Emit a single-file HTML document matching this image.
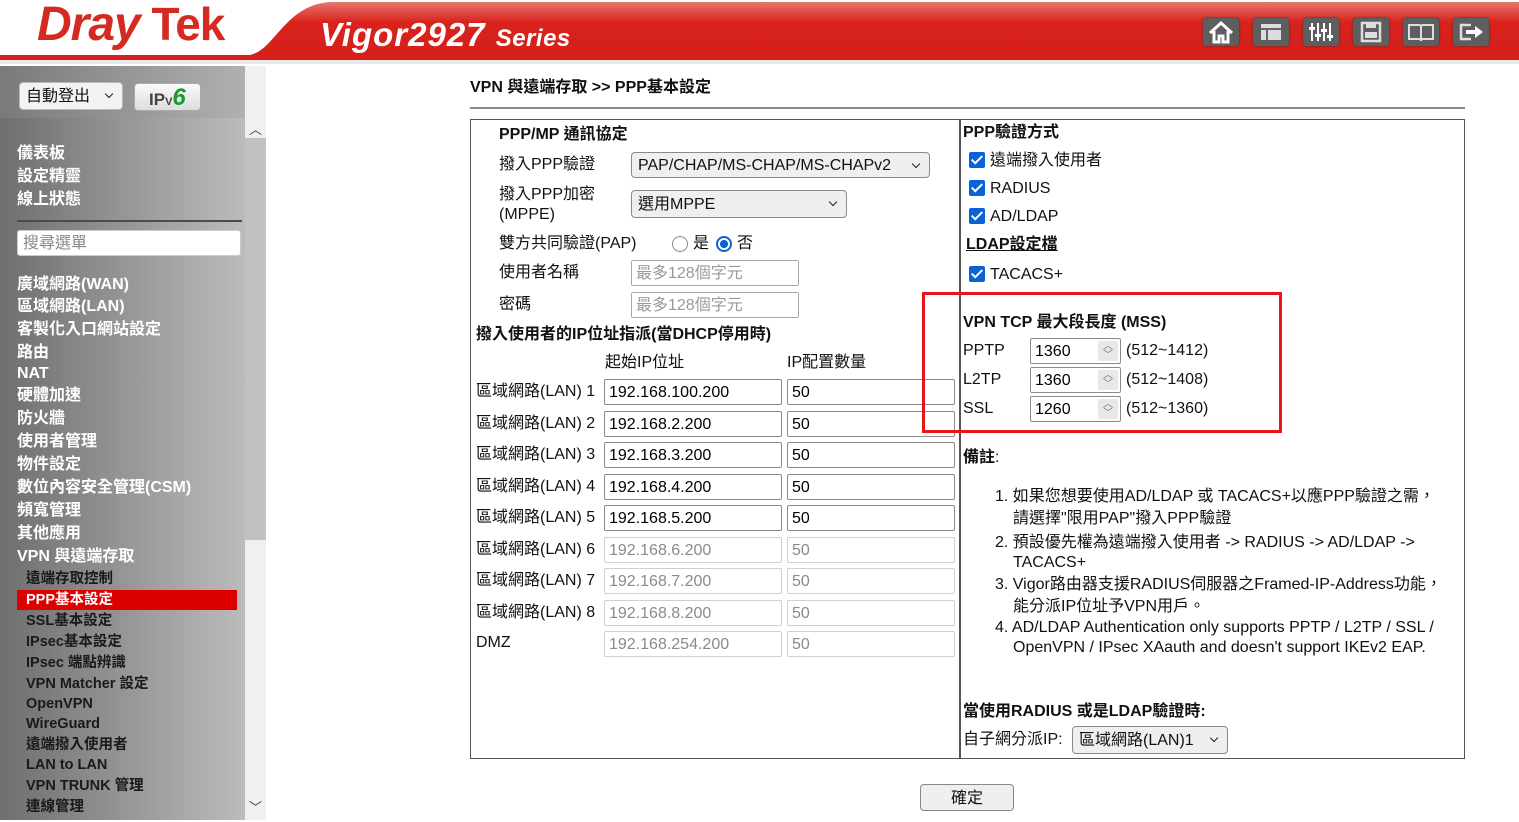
<!DOCTYPE html>
<html><head><meta charset="utf-8">
<style>
*{box-sizing:border-box;margin:0;padding:0}
body{width:1519px;height:820px;overflow:hidden;background:#fff;position:relative;font-family:"Liberation Sans","Noto Sans CJK TC",sans-serif;font-size:16px;color:#111}
.a{position:absolute;white-space:nowrap;line-height:28px}
.b{font-weight:bold}
.inp{position:absolute;border:1px solid #8a8a8a;border-radius:2px;background:#fff;height:26px;padding-left:4px;line-height:26px;font-size:16px;color:#000}
.dis{border-color:#d0d0d0;color:#8a8a8a}
.ph{color:#999;border-color:#a8a8a8}
.sel{position:absolute;border:1px solid #8a8a8a;border-radius:4px;background:#efefef;padding-left:6px;line-height:26px;font-size:16px}
.sel:after{content:"";position:absolute;right:10px;top:8px;width:5px;height:5px;border-right:1.6px solid #222;border-bottom:1.6px solid #222;transform:rotate(45deg)}
.cb{position:absolute;width:16px;height:16px;background:#0a63d6;border-radius:2px}
.cb:after{content:"";position:absolute;left:5px;top:1px;width:4px;height:9px;border-right:2px solid #fff;border-bottom:2px solid #fff;transform:rotate(45deg)}
.side{color:#fff;font-weight:bold;font-size:16px;line-height:24px}
.sub{color:#1a1a1a;font-weight:bold;font-size:14.5px;left:26px;line-height:24px}
.ic{position:absolute;top:18px;width:36px;height:28px;background:#5e5e5e;border-radius:3px;box-shadow:0 0 2px #333}
.sp{position:absolute;right:2px;top:2px;width:20px;height:20px;background:#e8e8e8;font-size:10px;line-height:9px;text-align:center;color:#777;padding-top:1px}
</style></head><body>
<svg class="a" style="left:0;top:0" width="1519" height="66">
<defs><linearGradient id="rg" x1="0" y1="0" x2="0" y2="1"><stop offset="0" stop-color="#e8756f"/><stop offset=".35" stop-color="#d9221c"/><stop offset="1" stop-color="#d41f1a"/></linearGradient></defs>
<rect width="1519" height="66" fill="#fff"/>
<path d="M0 55 L250 55 C275 50 285 5 330 2 L1519 2 L1519 60 L0 60 Z" fill="url(#rg)"/>
<rect x="0" y="60" width="1519" height="4" fill="#e9e9e9"/>
</svg>
<div class="a" style="left:37px;top:0px;font-size:48px;line-height:48px;font-weight:bold;font-style:italic;color:#d42a22;letter-spacing:-1px">Dray<span style="font-style:normal;font-size:46px"> Tek</span></div>
<div class="a" style="left:320px;top:17px;font-size:33px;line-height:36px;font-weight:bold;font-style:italic;color:#fff;letter-spacing:1px">Vigor2927 <span style="font-size:24px;letter-spacing:0.5px">Series</span></div>
<div class="ic" style="left:1203px"><svg width="36" height="28"><path d="M7 15 L18 5 L29 15 M11 13 V24 H16 V18 H20 V24 H25 V13" fill="none" stroke="#fff" stroke-width="3"/></svg></div>
<div class="ic" style="left:1253px"><svg width="36" height="28"><rect x="8" y="6" width="20" height="16" fill="#ddd"/><rect x="8" y="10" width="20" height="2" fill="#666"/><rect x="13" y="12" width="2" height="10" fill="#666"/></svg></div>
<div class="ic" style="left:1303px"><svg width="36" height="28"><g stroke="#fff" stroke-width="2"><path d="M9 5V23M15 5V23M21 5V23M27 5V23"/></g><g fill="#fff"><rect x="6" y="9" width="6" height="3"/><rect x="12" y="16" width="6" height="3"/><rect x="18" y="11" width="6" height="3"/><rect x="24" y="17" width="6" height="3"/></g></svg></div>
<div class="ic" style="left:1353px"><svg width="36" height="28"><rect x="9" y="5" width="18" height="18" fill="none" stroke="#ddd" stroke-width="2.5"/><rect x="13" y="5" width="10" height="5" fill="#ddd"/><rect x="12" y="14" width="12" height="6" fill="#ddd"/></svg></div>
<div class="ic" style="left:1403px"><svg width="36" height="28"><path d="M6 7 H16 Q18 7 18 9 Q18 7 20 7 H30 V21 H20 Q18 21 18 23 Q18 21 16 21 H6 Z M18 9 V22" fill="none" stroke="#ddd" stroke-width="2"/></svg></div>
<div class="ic" style="left:1453px"><svg width="36" height="28"><path d="M18 7 H8 V21 H18" fill="none" stroke="#ddd" stroke-width="2.5"/><path d="M13 12 H22 V8 L30 14 L22 20 V16 H13 Z" fill="#fff"/></svg></div>
<div class="a" style="left:0;top:66px;width:245px;height:754px;background:linear-gradient(90deg,#6e6e6e,#bcbcbc)"></div>
<div class="a" style="left:245px;top:66px;width:21px;height:754px;background:#f0f0f0"></div>
<div class="a" style="left:245px;top:138px;width:21px;height:402px;background:#c1c1c1"></div>
<div class="a" style="left:249px;top:116px;font-size:13px;color:#444">︿</div>
<div class="a" style="left:249px;top:794px;font-size:13px;color:#444">﹀</div>
<div class="a" style="left:0;top:66px;width:245px;height:52px;background:linear-gradient(90deg,#7a7a7a,#b0b0b0)"></div>
<div class="sel" style="left:19px;top:82px;width:104px;height:28px;background:#f3f3f3;border-color:#bbb;line-height:28px">自動登出</div>
<div class="a" style="left:134px;top:83px;width:67px;height:28px;border-radius:4px;background:linear-gradient(#fafafa,#ddd);border:1px solid #aaa;font-weight:bold;font-size:17px;line-height:28px;padding-left:14px;color:#444">IP<span style="font-size:11px">V</span><span style="color:#1b9a2c;font-style:italic;font-size:24px">6</span></div>
<div class="a side" style="left:17px;top:142px">儀表板</div>
<div class="a side" style="left:17px;top:165px">設定精靈</div>
<div class="a side" style="left:17px;top:188px">線上狀態</div>
<div class="a" style="left:17px;top:220px;width:225px;height:2px;background:#4c4c4c"></div>
<div class="a" style="left:17px;top:230px;width:224px;height:26px;background:#fff;border-radius:3px;border:1px solid #ccc;color:#888;padding-left:5px;line-height:26px">搜尋選單</div>
<div class="a side" style="left:17px;top:273px">廣域網路(WAN)</div>
<div class="a side" style="left:17px;top:295px">區域網路(LAN)</div>
<div class="a side" style="left:17px;top:318px">客製化入口網站設定</div>
<div class="a side" style="left:17px;top:341px">路由</div>
<div class="a side" style="left:17px;top:362px">NAT</div>
<div class="a side" style="left:17px;top:384px">硬體加速</div>
<div class="a side" style="left:17px;top:407px">防火牆</div>
<div class="a side" style="left:17px;top:430px">使用者管理</div>
<div class="a side" style="left:17px;top:453px">物件設定</div>
<div class="a side" style="left:17px;top:476px">數位內容安全管理(CSM)</div>
<div class="a side" style="left:17px;top:499px">頻寬管理</div>
<div class="a side" style="left:17px;top:522px">其他應用</div>
<div class="a side" style="left:17px;top:545px">VPN 與遠端存取</div>
<div class="a sub" style="top:567px">遠端存取控制</div>
<div class="a" style="left:17px;top:590px;width:220px;height:20px;background:#d00"></div>
<div class="a sub" style="top:588px;color:#fff">PPP基本設定</div>
<div class="a sub" style="top:609px">SSL基本設定</div>
<div class="a sub" style="top:630px">IPsec基本設定</div>
<div class="a sub" style="top:651px">IPsec 端點辨識</div>
<div class="a sub" style="top:672px">VPN Matcher 設定</div>
<div class="a sub" style="top:692px">OpenVPN</div>
<div class="a sub" style="top:712px">WireGuard</div>
<div class="a sub" style="top:733px">遠端撥入使用者</div>
<div class="a sub" style="top:753px">LAN to LAN</div>
<div class="a sub" style="top:774px">VPN TRUNK 管理</div>
<div class="a sub" style="top:795px">連線管理</div>
<div class="a b" style="left:470px;top:74px">VPN 與遠端存取 &gt;&gt; PPP基本設定</div>
<div class="a" style="left:470px;top:107px;width:995px;height:2px;background:#888"></div>
<div class="a" style="left:470px;top:119px;width:995px;height:640px;border:1.5px solid #555"></div>
<div class="a" style="left:959px;top:119px;width:1.5px;height:640px;background:#555"></div>
<div class="a b" style="left:499px;top:121px">PPP/MP 通訊協定</div>
<div class="a" style="left:499px;top:151px">撥入PPP驗證</div>
<div class="sel" style="left:631px;top:152px;width:299px;height:26px">PAP/CHAP/MS-CHAP/MS-CHAPv2</div>
<div class="a" style="left:499px;top:181px">撥入PPP加密</div>
<div class="a" style="left:499px;top:201px">(MPPE)</div>
<div class="sel" style="left:631px;top:190px;width:216px;height:28px;line-height:28px">選用MPPE</div>
<div class="a" style="left:499px;top:230px">雙方共同驗證(PAP)</div>
<div class="a" style="left:672px;top:236px;width:16px;height:16px;border:1px solid #888;border-radius:50%"></div>
<div class="a" style="left:693px;top:230px">是</div>
<div class="a" style="left:716px;top:236px;width:16px;height:16px;border:2px solid #0a63d6;border-radius:50%;background:radial-gradient(#0a63d6 45%,#fff 50%)"></div>
<div class="a" style="left:737px;top:230px">否</div>
<div class="a" style="left:499px;top:259px">使用者名稱</div>
<div class="inp ph" style="left:631px;top:260px;width:168px">最多128個字元</div>
<div class="a" style="left:499px;top:291px">密碼</div>
<div class="inp ph" style="left:631px;top:292px;width:168px">最多128個字元</div>
<div class="a b" style="left:476px;top:321px">撥入使用者的IP位址指派(當DHCP停用時)</div>
<div class="a" style="left:605px;top:349px">起始IP位址</div>
<div class="a" style="left:787px;top:349px">IP配置數量</div>
<div class="a" style="left:476px;top:378px">區域網路(LAN) 1</div><div class="inp" style="left:604px;top:379px;width:178px">192.168.100.200</div><div class="inp" style="left:787px;top:379px;width:168px">50</div>
<div class="a" style="left:476px;top:410px">區域網路(LAN) 2</div><div class="inp" style="left:604px;top:411px;width:178px">192.168.2.200</div><div class="inp" style="left:787px;top:411px;width:168px">50</div>
<div class="a" style="left:476px;top:441px">區域網路(LAN) 3</div><div class="inp" style="left:604px;top:442px;width:178px">192.168.3.200</div><div class="inp" style="left:787px;top:442px;width:168px">50</div>
<div class="a" style="left:476px;top:473px">區域網路(LAN) 4</div><div class="inp" style="left:604px;top:474px;width:178px">192.168.4.200</div><div class="inp" style="left:787px;top:474px;width:168px">50</div>
<div class="a" style="left:476px;top:504px">區域網路(LAN) 5</div><div class="inp" style="left:604px;top:505px;width:178px">192.168.5.200</div><div class="inp" style="left:787px;top:505px;width:168px">50</div>
<div class="a" style="left:476px;top:536px">區域網路(LAN) 6</div><div class="inp dis" style="left:604px;top:537px;width:178px">192.168.6.200</div><div class="inp dis" style="left:787px;top:537px;width:168px">50</div>
<div class="a" style="left:476px;top:567px">區域網路(LAN) 7</div><div class="inp dis" style="left:604px;top:568px;width:178px">192.168.7.200</div><div class="inp dis" style="left:787px;top:568px;width:168px">50</div>
<div class="a" style="left:476px;top:599px">區域網路(LAN) 8</div><div class="inp dis" style="left:604px;top:600px;width:178px">192.168.8.200</div><div class="inp dis" style="left:787px;top:600px;width:168px">50</div>
<div class="a" style="left:476px;top:629px">DMZ</div><div class="inp dis" style="left:604px;top:631px;width:178px">192.168.254.200</div><div class="inp dis" style="left:787px;top:631px;width:168px">50</div>
<div class="a b" style="left:963px;top:119px">PPP驗證方式</div>
<div class="cb" style="left:969px;top:152px"></div><div class="a" style="left:990px;top:147px">遠端撥入使用者</div>
<div class="cb" style="left:969px;top:180px"></div><div class="a" style="left:990px;top:175px">RADIUS</div>
<div class="cb" style="left:969px;top:208px"></div><div class="a" style="left:990px;top:203px">AD/LDAP</div>
<div class="a b" style="left:966px;top:231px;text-decoration:underline">LDAP設定檔</div>
<div class="cb" style="left:969px;top:266px"></div><div class="a" style="left:990px;top:261px">TACACS+</div>
<div class="a" style="left:922px;top:292px;width:360px;height:141px;border:3px solid #e8141a"></div>
<div class="a b" style="left:963px;top:309px">VPN TCP 最大段長度 (MSS)</div>
<div class="a" style="left:963px;top:337px">PPTP</div><div class="inp" style="left:1030px;top:338px;width:91px">1360<span class="sp">︿<br>﹀</span></div><div class="a" style="left:1126px;top:337px">(512~1412)</div>
<div class="a" style="left:963px;top:366px">L2TP</div><div class="inp" style="left:1030px;top:367px;width:91px">1360<span class="sp">︿<br>﹀</span></div><div class="a" style="left:1126px;top:366px">(512~1408)</div>
<div class="a" style="left:963px;top:395px">SSL</div><div class="inp" style="left:1030px;top:396px;width:91px">1260<span class="sp">︿<br>﹀</span></div><div class="a" style="left:1126px;top:395px">(512~1360)</div>
<div class="a" style="left:963px;top:444px"><b>備註</b>:</div>
<div class="a" style="left:995px;top:483px">1. 如果您想要使用AD/LDAP 或 TACACS+以應PPP驗證之需，</div>
<div class="a" style="left:1013px;top:505px">請選擇"限用PAP"撥入PPP驗證</div>
<div class="a" style="left:995px;top:529px">2. 預設優先權為遠端撥入使用者 -&gt; RADIUS -&gt; AD/LDAP -&gt;</div>
<div class="a" style="left:1013px;top:549px">TACACS+</div>
<div class="a" style="left:995px;top:571px">3. Vigor路由器支援RADIUS伺服器之Framed-IP-Address功能，</div>
<div class="a" style="left:1013px;top:593px">能分派IP位址予VPN用戶。</div>
<div class="a" style="left:995px;top:614px">4. AD/LDAP Authentication only supports PPTP / L2TP / SSL /</div>
<div class="a" style="left:1013px;top:634px">OpenVPN / IPsec XAauth and doesn't support IKEv2 EAP.</div>
<div class="a b" style="left:963px;top:698px">當使用RADIUS 或是LDAP驗證時:</div>
<div class="a" style="left:963px;top:726px">自子網分派IP:</div>
<div class="sel" style="left:1072px;top:726px;width:156px;height:28px;line-height:28px">區域網路(LAN)1</div>
<div class="a" style="left:920px;top:784px;width:94px;height:27px;border:1px solid #888;border-radius:4px;background:#efefef;text-align:center;line-height:27px">確定</div>
</body></html>
